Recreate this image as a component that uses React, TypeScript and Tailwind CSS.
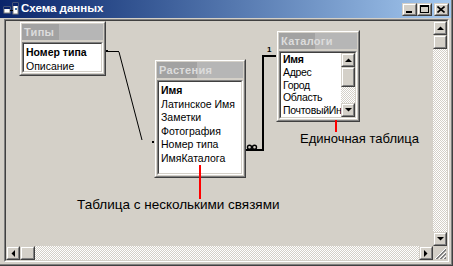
import React from 'react';

type Dir = 'up' | 'down' | 'left' | 'right';

function Arrow({ dir }: { dir: Dir }) {
  const pts: Record<Dir, string> = {
    up: '0,4 7,4 3.5,0.5',
    down: '0,0 7,0 3.5,3.5',
    left: '4,0 4,7 0.5,3.5',
    right: '0,0 0,7 3.5,3.5',
  };
  const horiz = dir === 'left' || dir === 'right';
  return (
    <svg width={horiz ? 4 : 7} height={horiz ? 7 : 4} viewBox={horiz ? '0 0 4 7' : '0 0 7 4'}>
      <polygon points={pts[dir]} fill="#000" />
    </svg>
  );
}

function Raised({ className = '', children }: { className?: string; children?: React.ReactNode }) {
  return (
    <div className={`border border-t-[#d4d0c8] border-l-[#d4d0c8] border-r-[#404040] border-b-[#404040] ${className}`}>
      <div className="w-full h-full border border-t-white border-l-white border-r-[#808080] border-b-[#808080] bg-[#d4d0c8] flex items-center justify-center">
        {children}
      </div>
    </div>
  );
}

const checker =
  'bg-[image:repeating-conic-gradient(#ffffff_0_25%,#d4d0c8_0_50%)] bg-[length:2px_2px]';

function TitleBar() {
  return (
    <div className="h-[18px] flex items-center bg-linear-to-r from-[#0a246a] to-[#a6caf0] pr-[2px]">
      {/* little diagram icon */}
      <svg width="16" height="14" viewBox="0 0 16 14" className="ml-[3px] mr-[1px]">
        <rect x="10" y="1" width="5" height="11" fill="#fff" stroke="#808080" strokeWidth="1" />
        <rect x="10" y="1" width="5" height="3" fill="#0a246a" />
        <rect x="1" y="5" width="6" height="6" fill="#fff" stroke="#808080" strokeWidth="1" />
        <rect x="1" y="5" width="6" height="2" fill="#0a246a" />
        <line x1="7" y1="8.5" x2="10" y2="8.5" stroke="#000" strokeWidth="1" />
        <rect x="12" y="6" width="2" height="2" fill="#3a6ea5" />
      </svg>
      <span className="text-white font-bold text-[11.5px] leading-none ml-[1px]">Схема данных</span>
      <div className="flex-1" />
      <Raised className="w-[15px] h-[13px]">
        <div className="w-[6px] h-[2px] bg-black mt-[5px] mr-[1px]" />
      </Raised>
      <Raised className="w-[15px] h-[13px]">
        <div className="w-[9px] h-[8px] border border-black border-t-2 mr-[1px]" />
      </Raised>
      <Raised className="w-[15px] h-[13px] ml-[2px]">
        <svg width="8" height="7" viewBox="0 0 8 7" className="mr-[1px]">
          <path d="M0.5 0.5 L7.5 6.5 M7.5 0.5 L0.5 6.5" stroke="#000" strokeWidth="1.6" />
        </svg>
      </Raised>
    </div>
  );
}

interface TableProps {
  title: string;
  items: string[];
  className: string;
  rowClass: string;
  listPad: string;
  scroll?: boolean;
}

function TableBox({ title, items, className, rowClass, listPad, scroll }: TableProps) {
  return (
    <div
      className={`absolute border border-t-[#d4d0c8] border-l-[#d4d0c8] border-r-[#404040] border-b-[#404040] ${className}`}
    >
      <div className="w-full h-full border border-t-white border-l-white border-r-[#808080] border-b-[#808080] bg-[#d4d0c8] p-[1px] flex flex-col gap-[2px]">
        <div className="h-[16px] shrink-0 flex items-center pl-[2px] bg-[linear-gradient(to_right,#a2a2a2_46%,#b6b6b6_46%)]">
          <span className="text-[11px] font-bold text-[#dcdcdc] leading-none tracking-[0.3px]">{title}</span>
        </div>
        <div className="flex-1 min-h-0 border border-t-[#808080] border-l-[#808080] border-r-white border-b-white">
          <div className="w-full h-full border border-t-[#404040] border-l-[#404040] border-r-[#d4d0c8] border-b-[#d4d0c8] bg-white flex">
            <div className={`flex-1 min-w-0 overflow-hidden ${listPad}`}>
              {items.map((it, i) => (
                <div
                  key={it}
                  className={`text-black whitespace-nowrap ${rowClass} ${i === 0 ? 'font-bold' : ''}`}
                >
                  {it}
                </div>
              ))}
            </div>
            {scroll && (
              <div className="w-[14px] flex flex-col">
                <Raised className="h-[14px]">
                  <Arrow dir="up" />
                </Raised>
                <Raised className="h-[20px]" />
                <div className={`flex-1 ${checker}`} />
                <Raised className="h-[14px]">
                  <Arrow dir="down" />
                </Raised>
              </div>
            )}
          </div>
        </div>
      </div>
    </div>
  );
}

function Canvas() {
  return (
    <div className="relative overflow-hidden bg-[#d4d0c8]">
      {/* relationship lines */}
      <svg className="absolute inset-0 w-full h-full" shapeRendering="crispEdges">
        <rect x="100" y="29" width="2" height="2" fill="#000" />
        <line x1="102" y1="30.5" x2="113" y2="30.5" stroke="#000" strokeWidth="1" />
        <line x1="113" y1="31" x2="136" y2="119" stroke="#000" strokeWidth="1" shapeRendering="auto" />
        <rect x="146" y="120" width="2" height="2" fill="#000" />
        <polyline points="240,129 257,129 257,35 270,35" fill="none" stroke="#000" strokeWidth="2" />
        <circle cx="243.5" cy="126.3" r="2" fill="none" stroke="#000" strokeWidth="1.4" shapeRendering="auto" />
        <circle cx="248.5" cy="126.3" r="2" fill="none" stroke="#000" strokeWidth="1.4" shapeRendering="auto" />
      </svg>
      <span className="absolute left-[261px] top-[25px] text-[8px] font-bold leading-none text-black">1</span>

      <TableBox
        title="Типы"
        items={['Номер типа', 'Описание']}
        className="left-[13px] top-0 w-[87px] h-[55px]"
        rowClass="text-[10.5px] leading-[14px]"
        listPad="pt-[1px] pl-[2px]"
      />
      <TableBox
        title="Растения"
        items={['Имя', 'Латинское Имя', 'Заметки', 'Фотография', 'Номер типа', 'ИмяКаталога']}
        className="left-[148px] top-[38px] w-[92px] h-[119px]"
        rowClass="text-[10.5px] leading-[13.6px]"
        listPad="pt-[2px] pl-[2px]"
      />
      <TableBox
        title="Каталоги"
        items={['Имя', 'Адрес', 'Город', 'Область', 'ПочтовыйИн']}
        className="left-[270px] top-[9px] w-[84px] h-[92px]"
        rowClass="text-[10.5px] leading-[12.8px] tracking-[-0.3px]"
        listPad="pt-0 pl-[2px]"
        scroll
      />

      {/* red callout lines */}
      <div className="absolute left-[193px] top-[144px] w-[2px] h-[34px] bg-[#ff0000]" />
      <div className="absolute left-[329px] top-[99px] w-[2px] h-[12px] bg-[#ff0000]" />

      <span className="absolute left-[294px] top-[110px] text-[13px] leading-4 text-black whitespace-nowrap">
        Единочная таблица
      </span>
      <span className="absolute left-[71px] top-[176px] text-[13.5px] leading-4 text-black whitespace-nowrap">
        Таблица с несколькими связями
      </span>
    </div>
  );
}

function VScroll() {
  return (
    <div className="flex flex-col">
      <Raised className="h-[14px]">
        <Arrow dir="up" />
      </Raised>
      <Raised className="h-[14px]" />
      <div className={`flex-1 ${checker}`} />
      <Raised className="h-[14px]">
        <Arrow dir="down" />
      </Raised>
    </div>
  );
}

function HScroll() {
  return (
    <div className="flex">
      <Raised className="w-[14px]">
        <Arrow dir="left" />
      </Raised>
      <Raised className="w-[15px]" />
      <div className={`flex-1 ${checker}`} />
      <Raised className="w-[14px]">
        <Arrow dir="right" />
      </Raised>
    </div>
  );
}

function Grip() {
  return (
    <div className="bg-[#d4d0c8] flex">
      <svg width="14" height="14" viewBox="0 0 14 14" shapeRendering="crispEdges">
        {[0, 4, 8].map((o) => (
          <g key={o}>
            <line x1={13} y1={2 + o} x2={2 + o} y2={13} stroke="#fff" strokeWidth="1" />
            <line x1={13} y1={3 + o} x2={3 + o} y2={13} stroke="#808080" strokeWidth="1" />
            <line x1={13} y1={4 + o} x2={4 + o} y2={13} stroke="#808080" strokeWidth="1" />
          </g>
        ))}
      </svg>
    </div>
  );
}

export default function App() {
  return (
    <div className="w-[453px] h-[266px] bg-[#d4d0c8] border-r border-b border-[#404040] font-['Liberation_Sans',Arial,sans-serif] select-none">
      <div className="w-full h-full border-r border-b border-[#808080] flex flex-col">
        <TitleBar />
        <div className="mt-[1px] ml-[4px] mr-[2px] mb-[2px] flex-1 min-h-0 flex border border-t-[#808080] border-l-[#808080] border-r-white border-b-white">
          <div className="flex-1 grid grid-cols-[1fr_14px] grid-rows-[1fr_14px] border border-t-[#404040] border-l-[#404040] border-r-[#d4d0c8] border-b-[#d4d0c8]">
            <Canvas />
            <VScroll />
            <HScroll />
            <Grip />
          </div>
        </div>
      </div>
    </div>
  );
}
